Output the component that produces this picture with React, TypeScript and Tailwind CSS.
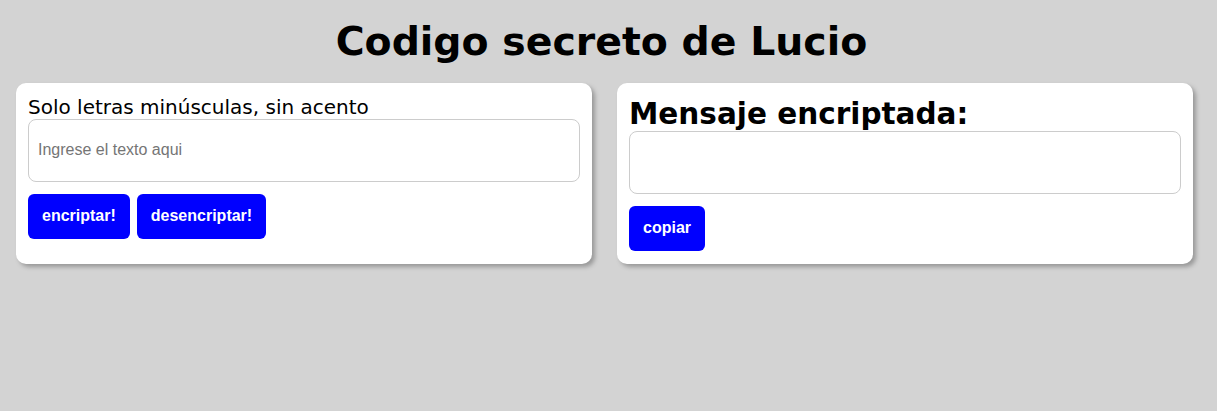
import React, { useState } from 'react';

// Small encoder page: two cards side by side
const App: React.FC = () => {
  const [text, setText] = useState('');
  const [result, setResult] = useState('');

  const btn =
    "h-[45px] rounded-[6px] bg-[#0000ff] px-[14px] font-['Liberation_Sans',Arial,sans-serif] text-base font-bold text-white";

  return (
    <div className="min-h-[411px] bg-[#d3d3d3] font-['DejaVu_Sans',Verdana,sans-serif] text-black">
      <h1 className="pt-[18px] pr-[14px] text-center text-[39.4px] font-bold leading-[46.5px]">Codigo secreto de Lucio</h1>

      <div className="mt-[18px] flex gap-[25px] pl-4">
        <div className="flex w-[576px] flex-col rounded-[10px] bg-white px-3 pt-[13px] pb-3 shadow-[3px_3px_4px_#999]">
          <label className="text-[20px] leading-[1.164]">Solo letras minúsculas, sin acento</label>
          <input
            value={text}
            onChange={e => setText(e.target.value)}
            placeholder="Ingrese el texto aqui"
            className="h-[63px] w-full rounded-[8px] border border-[#ccc] px-[9px] font-['Liberation_Sans',Arial,sans-serif] text-base outline-none placeholder:text-[#757575]"
          />
          <div className="mt-3 flex gap-[7px]">
            <button className={btn} onClick={() => setResult(text)}>encriptar!</button>
            <button className={btn} onClick={() => setResult(text)}>desencriptar!</button>
          </div>
        </div>

        <div className="flex w-[576px] flex-col rounded-[10px] bg-white px-3 pt-3 pb-[13px] shadow-[3px_3px_4px_#999]">
          <h2 className="mt-px text-[29.5px] font-bold leading-[37px]">Mensaje encriptada:</h2>
          <input
            readOnly
            value={result}
            className="-mt-[2px] h-[63px] w-full rounded-[8px] border border-[#ccc] px-[9px] font-['Liberation_Sans',Arial,sans-serif] text-base outline-none"
          />
          <div className="mt-3 flex">
            <button className={btn}>copiar</button>
          </div>
        </div>
      </div>
    </div>
  );
};

export default App;
